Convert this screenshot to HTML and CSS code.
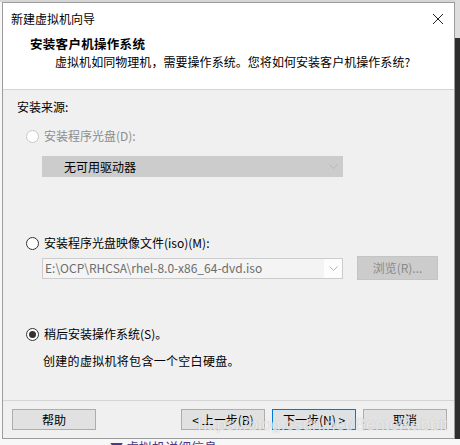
FILE: index.html
```html
<!DOCTYPE html>
<html lang="zh-CN">

<head>
  <meta charset="UTF-8">
  <title>新建虚拟机向导</title>
  <link rel="stylesheet" href="styles.css">
</head>

<body>
  <div class="screen">
    <div class="gutter-l"></div>
    <div id="wizard">
      <div class="top">
        <div class="titlebar">
          <span class="title">新建虚拟机向导</span>
          <svg class="close" width="12" height="12" viewBox="0 0 12 12">
            <path d="M1 1L11 11M11 1L1 11" stroke="#222" stroke-width="1" fill="none" />
          </svg>
        </div>
        <div class="head">
          <h1>安装客户机操作系统</h1>
          <p>虚拟机如同物理机，需要操作系统。您将如何安装客户机操作系统?</p>
        </div>
      </div>

      <div class="main">
        <div class="group-label">安装来源:</div>

        <label class="option disabled">
          <span class="radio"></span>安装程序光盘(D):
        </label>
        <div class="combo combo-dis">
          <span class="combo-text">无可用驱动器</span>
          <svg class="chev" width="9" height="5" viewBox="0 0 9 5">
            <path d="M0.5 0.5L4.5 4.5L8.5 0.5" stroke="#b5b5b5" fill="none" />
          </svg>
        </div>

        <label class="option opt-iso">
          <span class="radio"></span>安装程序光盘映像文件(iso)(M):
        </label>
        <div class="iso-row">
          <div class="combo combo-iso">
            <span class="combo-text">E:\OCP\RHCSA\rhel-8.0-x86_64-dvd.iso</span>
            <span class="chev-box">
              <svg class="chev" width="9" height="5" viewBox="0 0 9 5">
                <path d="M0.5 0.5L4.5 4.5L8.5 0.5" stroke="#b5b5b5" fill="none" />
              </svg>
            </span>
          </div>
          <a class="btn btn-dis" href="javascript:void(0)">浏览(R)...</a>
        </div>

        <label class="option opt-later">
          <span class="radio checked"></span>稍后安装操作系统(S)。
        </label>
        <p class="desc">创建的虚拟机将包含一个空白硬盘。</p>
      </div>

      <div class="foot">
        <a class="btn" href="javascript:void(0)">帮助</a>
        <div class="nav">
          <a class="btn" href="javascript:void(0)">&lt; 上一步(B)</a>
          <a class="btn btn-def" href="javascript:void(0)">下一步(N) &gt;</a>
          <a class="btn btn-cancel" href="javascript:void(0)">取消</a>
        </div>
        <span class="mark">https://blog.csdn.net/BentoRabbit</span>
      </div>
    </div>
    <div class="gutter-r"></div>
  </div>
  <div class="below">
    <span class="below-text">▼ 虚拟机详细信息</span>
  </div>
</body>

</html>
```

FILE: styles.css
```css
body,
div,
p,
h1 {
  margin: 0;
  padding: 0;
}

body {
  width: 460px;
  height: 445px;
  overflow: hidden;
  background: #f7f7f7;
  font: 12px/16px "Noto Sans CJK SC", "Noto Sans", sans-serif;
  color: #000;
}

a {
  color: #000;
  text-decoration: none;
  outline: none;
}

.screen {
  display: flex;
  padding-top: 2px;
  background: linear-gradient(#d6d6d6, #d6d6d6) no-repeat 0 0 / 100% 2px;
}

.gutter-l {
  width: 2px;
  flex: none;
}

.gutter-r {
  flex: 1;
  margin-top: -2px;
  background: linear-gradient(to bottom, #dedede 38px, #2e2e2e 38px);
}

#wizard {
  position: relative;
  width: 451px;
  height: 435px;
  border: 1px solid #9c9c9c;
  background: #f0f0f0;
  display: flex;
  flex-direction: column;
}

/* 标题栏 + 页头 */
.top {
  background: #fff;
  height: 86px;
  border-bottom: 1px solid #d5d5d5;
}

.titlebar {
  height: 31px;
  display: flex;
  align-items: center;
  justify-content: space-between;
  padding: 0 10px 0 8px;
}

.title {
  line-height: 30px;
}

.head {
  padding: 1px 0 0 27px;
}

.head h1 {
  font-size: 12.5px;
  font-weight: 700;
  line-height: 18px;
  letter-spacing: 0.3px;
}

.head p {
  padding-left: 25px;
  line-height: 18px;
  letter-spacing: 0.05px;
}

/* 主体 */
.main {
  box-sizing: border-box;
  height: 311px;
  padding: 9px 0 0 14px;
  border-bottom: 1px solid #d5d5d5;
  display: flex;
  flex-direction: column;
  align-items: flex-start;
}

.option {
  display: flex;
  align-items: center;
  margin-top: 13px;
  padding-left: 9px;
  height: 16px;
}

.option.disabled {
  color: #8d8d8d;
}

.radio {
  width: 11px;
  height: 11px;
  border: 1px solid #333;
  border-radius: 50%;
  background: #fff;
  margin-right: 5px;
  position: relative;
}

.disabled .radio {
  border-color: #c7c7c7;
}

.radio.checked::after {
  content: "";
  position: absolute;
  left: 2px;
  top: 2px;
  width: 7px;
  height: 7px;
  border-radius: 50%;
  background: #333;
}

.combo {
  width: 299px;
  height: 19px;
  border: 1px solid #cccccc;
  display: flex;
  align-items: center;
  justify-content: space-between;
  margin-left: 25px;
}

.combo-dis {
  margin-top: 12px;
  background: #cccccc;
}

.combo-dis .combo-text {
  padding-left: 21px;
}

.combo-dis .chev {
  margin-right: 4px;
}

.opt-iso {
  margin-top: 58px;
}

.iso-row {
  display: flex;
  align-items: center;
  height: 24px;
  margin-top: 5px;
}

.combo-iso {
  background: #f4f4f4;
  color: #6d6d6d;
}

.combo-iso .combo-text {
  padding-left: 2px;
}

.chev-box {
  width: 18px;
  height: 19px;
  background: #fdfdfd;
  display: flex;
  align-items: center;
  justify-content: center;
}

.btn {
  display: block;
  width: 82px;
  height: 19px;
  line-height: 19px;
  text-align: center;
  background: #e1e1e1;
  border: 1px solid #adadad;
}

.btn-dis {
  margin-left: 14px;
  width: 79px;
  height: 22px;
  line-height: 22px;
  background: #cccccc;
  border-color: #c4c4c4;
  color: #8a8a8a;
}

.opt-later {
  margin-top: 46px;
}

.desc {
  margin: 11px 0 0 26px;
  letter-spacing: 0.3px;
}

/* 底部按钮 */
.foot {
  flex: 1;
  display: flex;
  justify-content: space-between;
  padding: 8px 7px 0 9px;
}

.nav {
  display: flex;
  gap: 7px;
}

.btn-def {
  border-color: #0078d7;
  box-shadow: inset 0 0 0 1px #cfe6f8;
}

.mark {
  position: absolute;
  right: 6px;
  bottom: 3px;
  font: 17px/20px "Liberation Sans", Arial, sans-serif;
  color: rgba(255, 255, 255, 0.7);
  text-shadow: 0 0 1px rgba(120, 120, 120, 0.45);
  pointer-events: none;
}

/* 窗口下方 */
.below {
  height: 7px;
  overflow: hidden;
  padding-left: 110px;
  background: #f7f7f7;
}

.below-text {
  display: block;
  color: #4b3a8c;
  font-size: 13px;
  line-height: 14px;
  margin-top: 1px;
}
```
